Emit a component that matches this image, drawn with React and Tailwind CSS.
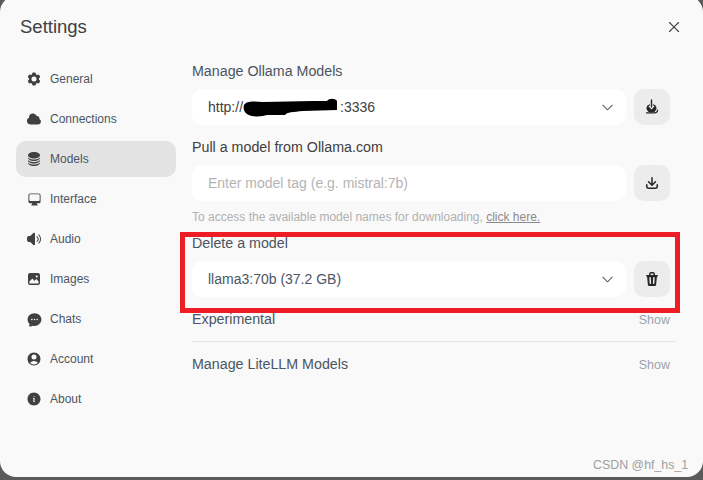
import React from "react";
import {
  HiCog6Tooth, HiCloud, HiCircleStack, HiComputerDesktop, HiSpeakerWave,
  HiChatBubbleOvalLeftEllipsis, HiUserCircle, HiInformationCircle, HiChevronDown, HiXMark,
} from "react-icons/hi2";

function PhotoIcon({ className }) {
  return (
    <svg viewBox="0 0 16 16" fill="currentColor" className={className}>
      <path fillRule="evenodd" clipRule="evenodd" d="M4 2h8a2 2 0 0 1 2 2v8a2 2 0 0 1-2 2H4a2 2 0 0 1-2-2V4a2 2 0 0 1 2-2Zm-.6 8.6v1.1c0 .5.4.9.9.9h7.4c.5 0 .9-.4.9-.9v-1.1l-2.3-2.5-1.9 2-1.9-2.7-3.1 3.2ZM10.8 4.4a1.1 1.1 0 1 0 0 2.2 1.1 1.1 0 0 0 0-2.2Z" />
    </svg>
  );
}

const nav = [
  ["General", HiCog6Tooth, "w-[16px] h-[16px]"],
  ["Connections", HiCloud, "w-[16px] h-[16px]"],
  ["Models", HiCircleStack, "w-[16px] h-[16px]"],
  ["Interface", HiComputerDesktop, "w-[15px] h-[15px]"],
  ["Audio", HiSpeakerWave, "w-[16px] h-[16px]"],
  ["Images", PhotoIcon, "w-[16px] h-[16px]"],
  ["Chats", HiChatBubbleOvalLeftEllipsis, "w-[17px] h-[17px]"],
  ["Account", HiUserCircle, "w-[16px] h-[16px]"],
  ["About", HiInformationCircle, "w-[16px] h-[16px]"],
];

function Tray() {
  return (
    <svg viewBox="0 0 16 16" fill="currentColor" className="w-[16px] h-[16px]">
      <path d="M8.75 2.75a.75.75 0 0 0-1.5 0v5.69L5.03 6.22a.75.75 0 0 0-1.06 1.06l3.5 3.5a.75.75 0 0 0 1.06 0l3.5-3.5a.75.75 0 0 0-1.06-1.06L8.75 8.44V2.75Z" />
      <path d="M3.5 9.75a.75.75 0 0 0-1.5 0v1.5A2.75 2.75 0 0 0 4.75 14h6.5A2.75 2.75 0 0 0 14 11.25v-1.5a.75.75 0 0 0-1.5 0v1.5c0 .69-.56 1.25-1.25 1.25h-6.5c-.69 0-1.25-.56-1.25-1.25v-1.5Z" />
    </svg>
  );
}

function Stack() {
  return (
    <svg viewBox="0 0 16 16" className="w-[16px] h-[16px]">
      <ellipse cx="7.5" cy="9.2" rx="5" ry="4.2" fill="#262626" />
      <path d="M2.5 13.8 H10.5 C12.6 13.8 13.6 12.8 13.6 11" fill="none" stroke="#262626" strokeWidth="1.2" strokeLinecap="round" />
      <path d="M7.5 1 V8.5" stroke="#ececec" strokeWidth="3.2" />
      <path d="M7.5 1 V9" stroke="#262626" strokeWidth="1.4" strokeLinecap="round" />
      <path d="M4.9 6.8 L7.5 9.6 L10.1 6.8" fill="none" stroke="#ececec" strokeWidth="1.2" />
    </svg>
  );
}

function Trash() {
  return (
    <svg viewBox="0 0 16 16" fill="currentColor" className="w-[16px] h-[16px]">
      <path fillRule="evenodd" clipRule="evenodd" d="M5 3.25V4H2.75a.75.75 0 0 0 0 1.5h.3l.815 8.15A1.5 1.5 0 0 0 5.357 15h5.285a1.5 1.5 0 0 0 1.493-1.35l.815-8.15h.3a.75.75 0 0 0 0-1.5H11v-.75A2.25 2.25 0 0 0 8.75 1h-1.5A2.25 2.25 0 0 0 5 3.25Zm2.25-.75a.75.75 0 0 0-.75.75V4h3v-.75a.75.75 0 0 0-.75-.75h-1.5ZM6.05 6a.75.75 0 0 1 .787.713l.275 5.5a.75.75 0 0 1-1.498.075l-.275-5.5A.75.75 0 0 1 6.05 6Zm3.9 0a.75.75 0 0 1 .712.787l-.275 5.5a.75.75 0 0 1-1.498-.075l.275-5.5a.75.75 0 0 1 .786-.711Z" />
    </svg>
  );
}

function Row({ children, icon, chevron }) {
  return (
    <div className="flex gap-2 pr-[6px]">
      <div className="relative flex-1 h-9 bg-white rounded-[10px] flex items-center justify-between pl-4 pr-[11px] text-[14px]">
        {children}
        {chevron && <HiChevronDown className="w-[15px] h-[15px] text-[#4b5563]" />}
      </div>
      <div className="w-9 h-9 rounded-[10px] bg-[#ececec] flex items-center justify-center text-[#262626]">{icon}</div>
    </div>
  );
}

export default function App() {
  return (
    <div className="relative w-[703px] h-[480px] overflow-hidden bg-[#5a5a5a] font-['Liberation_Sans',Arial,sans-serif]">
      <div className="w-[703px] h-[481px] -mt-1 bg-[#f9f9f9] rounded-2xl">
        <div className="flex items-center justify-between pl-5 pr-5 pt-[17px] pb-5">
          <h1 className="text-[18.5px] leading-7 font-normal text-[#404040]">Settings</h1>
          <HiXMark className="w-[18px] h-[18px] text-[#404040]" />
        </div>
        <div className="flex">
          <div className="w-[160px] ml-4 flex flex-col gap-1">
            {nav.map(([label, Icon, size]) => (
              <div key={label} className={`h-9 rounded-[10px] flex items-center pl-[10px] gap-[8px] text-[12px] text-[#4b5563] ${label === "Models" ? "bg-[#e3e3e3]" : ""}`}>
                <span className="w-[16px] flex justify-center"><Icon className={`${size} shrink-0 text-[#404040]`} /></span>
                <span>{label}</span>
              </div>
            ))}
          </div>
          <div className="w-[484px] ml-4 text-[#4b5563]">
            <div className="text-[14.25px] leading-5 mb-2">Manage Ollama Models</div>
            <Row icon={<Stack />} chevron>
              <span className="text-[#404040]">http://</span>
              <span className="flex-1" />
              <svg viewBox="0 0 98 22" className="absolute left-[51px] top-[6px] w-[98px] h-[22px]">
                <path d="M1 10 C3 6 10 6 20 7 L70 6 L84 6 C86 3 92 3 94 6 L94 15 L60 16 C50 17 44 17 42 20 L24 20 C18 22 8 22 4 19 C1 17 0 13 1 10 Z" fill="#000" />
              </svg>
              <span className="absolute left-[148px] text-[#404040]">:3336</span>
            </Row>
            <div className="text-[14.25px] leading-5 mt-3 mb-2 text-[#404040]">Pull a model from Ollama.com</div>
            <Row icon={<Tray />}>
              <span className="text-[#b4b4b4]">Enter model tag (e.g. mistral:7b)</span>
            </Row>
            <div className="mt-2 text-[12px] leading-4 text-[#b0b0b0]">
              To access the available model names for downloading, <span className="underline text-[#8a8a8a]">click here.</span>
            </div>
            <div className="text-[14.25px] leading-5 mt-2 mb-2">Delete a model</div>
            <Row icon={<Trash />} chevron>
              <span>llama3:70b (37.2 GB)</span>
            </Row>
            <div className="flex items-center justify-between pr-[6px] mt-[13px] h-5">
              <span className="text-[14.25px]">Experimental</span>
              <span className="text-[12.5px] text-[#9ca3af]">Show</span>
            </div>
            <div className="mt-[11px] border-t border-[#e5e5e5]" />
            <div className="flex items-center justify-between pr-[6px] mt-[13px] h-5">
              <span className="text-[14.25px]">Manage LiteLLM Models</span>
              <span className="text-[12.5px] text-[#9ca3af]">Show</span>
            </div>
          </div>
        </div>
      </div>
      <div className="absolute left-[180px] top-[232px] w-[500px] h-[81px] border-[5px] border-[#ee1c25]" />
      <div className="absolute left-[593px] top-[457px] text-[12.4px] leading-4 text-[#a0a0a0]">CSDN @hf_hs_1</div>
    </div>
  );
}
